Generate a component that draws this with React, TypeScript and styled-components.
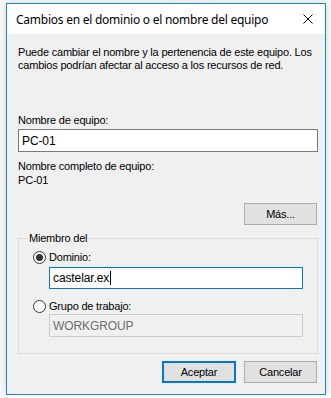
import React, { FC } from "react";
import styled, { createGlobalStyle } from "styled-components";

const GlobalStyle = createGlobalStyle`
  html, body {
    margin: 0;
    padding: 0;
    background: #fbfbfb;
  }
  body {
    font-family: "Liberation Sans", Arial, sans-serif;
  }
`;

// Dialog frame
const Window = styled.div`
  margin: 3px 0 0 6px;
  width: 320px;
  height: 392px;
  box-sizing: border-box;
  border: 1px solid #1883d7;
  background: #f0f0f0;
  display: flex;
  flex-direction: column;
  box-shadow: 0 0 8px rgba(0, 0, 0, 0.18);
`;

const TitleBar = styled.div`
  height: 30px;
  background: #ffffff;
  display: flex;
  align-items: center;
  justify-content: space-between;
  padding: 0 7px 0 9px;
`;

const Title = styled.span`
  font-family: "Noto Sans", "Liberation Sans", sans-serif;
  font-size: 12px;
  color: #000;
  letter-spacing: -0.25px;
`;

const CloseButton = styled.div`
  width: 20px;
  height: 20px;
  display: flex;
  align-items: center;
  justify-content: center;
`;

const Content = styled.div`
  flex: 1;
  display: flex;
  flex-direction: column;
  padding: 12px 7px 0 11px;
  font-size: 11px;
  letter-spacing: -0.2px;
  color: #000;
`;

const Intro = styled.p`
  margin: 0;
  line-height: 13px;
  white-space: nowrap;
`;

const FieldLabel = styled.div<{ $gap?: number }>`
  margin-top: ${(p) => p.$gap ?? 0}px;
  line-height: 14px;
`;

const TextInput = styled.div<{ $focused?: boolean; $disabled?: boolean; $h?: number; $gap?: number }>`
  height: ${(p) => p.$h ?? 23}px;
  margin-top: ${(p) => p.$gap ?? 0}px;
  box-sizing: border-box;
  border: 1px solid
    ${(p) => (p.$focused ? "#0078d7" : p.$disabled ? "#cccccc" : "#7a7a7a")};
  background: ${(p) => (p.$disabled ? "#f0f0f0" : "#ffffff")};
  color: ${(p) => (p.$disabled ? "#6d6d6d" : "#000")};
  display: flex;
  align-items: center;
  padding-left: 3px;
  font-size: 12px;
  letter-spacing: -0.1px;
`;

const Caret = styled.span`
  display: inline-block;
  width: 1px;
  height: 14px;
  background: #000;
  margin-left: 1px;
`;

const ButtonRow = styled.div<{ $gap: number }>`
  display: flex;
  justify-content: flex-end;
  gap: 8px;
  margin-top: ${(p) => p.$gap}px;
  padding-right: 1px;
`;

const Button = styled.div<{ $default?: boolean }>`
  width: ${(p) => (p.$default ? 74 : 73)}px;
  height: 22px;
  box-sizing: border-box;
  background: #e1e1e1;
  border: ${(p) => (p.$default ? "2px solid #0078d7" : "1px solid #adadad")};
  display: flex;
  align-items: center;
  justify-content: center;
  font-size: 11px;
`;

// Group box
const Group = styled.fieldset`
  margin: 7px 0 0 0;
  padding: 5px 14px 16px 14px;
  border: 1px solid #dcdcdc;
  min-width: 0;
`;

const Legend = styled.legend`
  padding: 0 2px;
  margin-left: -6px;
  line-height: 13px;
`;

const RadioRow = styled.label<{ $gap?: number }>`
  display: flex;
  align-items: center;
  gap: 3px;
  margin-top: ${(p) => p.$gap ?? 0}px;
  height: 14px;
`;

const RadioCircle = styled.span<{ $checked?: boolean }>`
  width: 13px;
  height: 13px;
  box-sizing: border-box;
  border-radius: 50%;
  border: 1px solid #333;
  background: #fff;
  display: flex;
  align-items: center;
  justify-content: center;
  &::after {
    content: "";
    display: ${(p) => (p.$checked ? "block" : "none")};
    width: 7px;
    height: 7px;
    border-radius: 50%;
    background: #333;
  }
`;

const Indented = styled.div<{ $gap: number }>`
  margin: ${(p) => p.$gap}px 0 0 16px;
`;

const App: FC = () => {
  return (
    <>
      <GlobalStyle />
      <Window>
        <TitleBar>
          <Title>Cambios en el dominio o el nombre del equipo</Title>
          <CloseButton>
            <svg width="10" height="10" viewBox="0 0 10 10">
              <path d="M0.5 0.5L9.5 9.5M9.5 0.5L0.5 9.5" stroke="#000" strokeWidth="1" />
            </svg>
          </CloseButton>
        </TitleBar>
        <Content>
          <Intro>
            Puede cambiar el nombre y la pertenencia de este equipo. Los
            <br />
            cambios podrían afectar al acceso a los recursos de red.
          </Intro>
          <FieldLabel $gap={41}>Nombre de equipo:</FieldLabel>
          <TextInput $gap={2}>PC-01</TextInput>
          <FieldLabel $gap={7}>Nombre completo de equipo:</FieldLabel>
          <FieldLabel>PC-01</FieldLabel>
          <ButtonRow $gap={16}>
            <Button>Más...</Button>
          </ButtonRow>
          <Group>
            <Legend>Miembro del</Legend>
            <RadioRow>
              <RadioCircle $checked />
              Dominio:
            </RadioRow>
            <Indented $gap={3}>
              <TextInput $focused $h={22}>
                castelar.ex
                <Caret />
              </TextInput>
            </Indented>
            <RadioRow $gap={10}>
              <RadioCircle />
              Grupo de trabajo:
            </RadioRow>
            <Indented $gap={1}>
              <TextInput $disabled $h={23}>WORKGROUP</TextInput>
            </Indented>
          </Group>
          <ButtonRow $gap={7}>
            <Button $default>Aceptar</Button>
            <Button>Cancelar</Button>
          </ButtonRow>
        </Content>
      </Window>
    </>
  );
};

export default App;
